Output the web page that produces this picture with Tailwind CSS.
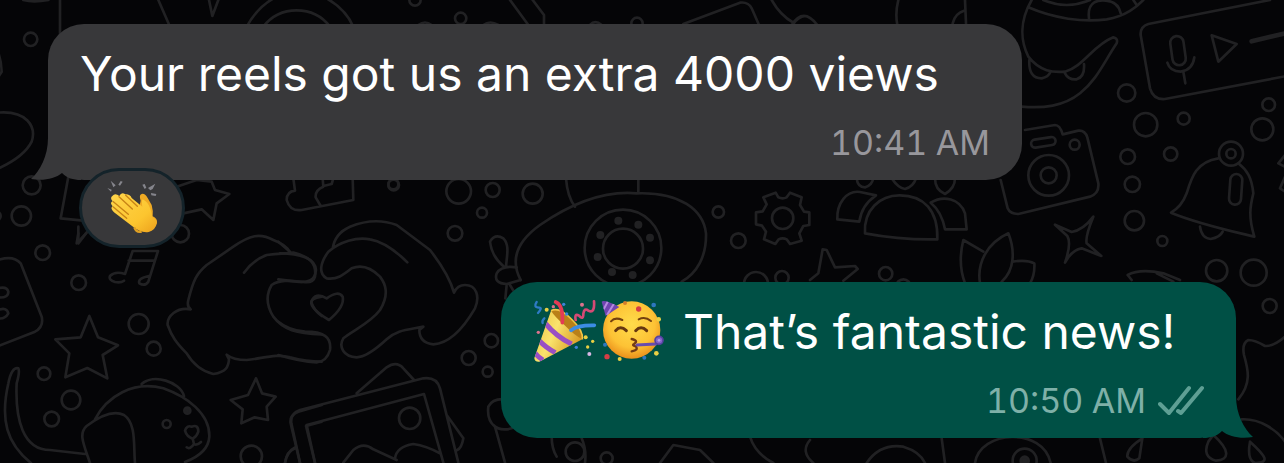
<!DOCTYPE html>
<html lang="en">
<head>
<meta charset="utf-8">
<meta name="viewport" content="width=device-width, initial-scale=1">
<title>Chat</title>
<script src="https://cdn.jsdelivr.net/npm/@tailwindcss/browser@4"></script>
</head>
<body class="bg-[#050507] font-['Inter',sans-serif]">
<main class="relative isolate min-h-screen overflow-hidden pt-6 pr-12 pb-6 pl-12">
  <!-- Doodle wallpaper -->
  <svg class="absolute top-0 left-0 -z-10 w-[1284px] max-w-none" viewBox="0 0 3852 1389" fill="none" stroke="#212123" stroke-width="8" stroke-linecap="round" stroke-linejoin="round" aria-hidden="true">
    <g>
      <path d="M70 0Q100 8 145 0M180 0V100M475 0L510 80M627 0L637 48L655 0M740 80C770 25 810 0 830-10M970-10C1010 10 1040 35 1060 80M790 80C840 15 940 15 990 80"/>
      <circle cx="92" cy="118" r="20"/><circle cx="1245" cy="0" r="17"/>
      <path d="M-8 150Q4 180 5 215L-8 235M-8 338C80 330 110 380 95 425C75 465 30 490-8 507M205 530L182 655L250 662"/>
      <circle cx="95" cy="556" r="27"/><circle cx="64" cy="648" r="29"/><circle cx="-12" cy="648" r="14"/><circle cx="1180" cy="553" r="15"/>
      <path d="M530 560L590 540L635 545L645 570L688 582L650 610L640 660L605 628L550 640M235 700L230 730L258 700M880 535L885 572Q860 575 860 600Q870 635 905 630L1060 600L1058 535M968 535L970 560Q945 570 947 592L962 618M1000 535L995 552L970 558"/>
    </g>
    <g transform="translate(0 660)">
      <path d="M235 20L235 70L262 35M-5 120Q40 105 62 130L125 290Q132 320 105 335L-5 378M-5 205Q20 198 25 215Q25 235-5 232M-5 270Q20 260 25 280Q15 298-5 295"/>
      <circle cx="128" cy="98" r="22"/><circle cx="236" cy="188" r="22"/><circle cx="541" cy="41" r="26"/><circle cx="416" cy="312" r="30"/><circle cx="461" cy="386" r="21"/><circle cx="132" cy="461" r="19"/><circle cx="213" cy="540" r="28"/><circle cx="155" cy="597" r="22"/><circle cx="754" cy="709" r="32"/>
      <path d="M372 182Q362 190 345 186Q325 180 330 168Q345 152 375 162L398 93H474L445 185Q435 200 418 190Q412 175 447 168M386 122H462"/>
      <path d="M268 288L242 352L166 358L208 400L196 472L262 444L322 475L308 405L354 376L294 352Z"/>
      <path d="M768 475L744 525L692 540L728 568L724 610L764 592L804 600L800 560L827 530L786 520Z"/>
      <path d="M93 729C20 670 0 600 25 490Q35 440 55 445Q60 455 50 490C45 600 70 690 150 690L255 702M270 729C250 670 235 640 260 618Q330 565 372 585C410 610 400 680 405 729M285 598C320 530 400 480 490 505C560 530 630 580 628 650Q625 700 555 726M425 492C460 460 540 485 552 528"/>
      <circle cx="500" cy="612" r="12"/><circle cx="562" cy="572" r="9" fill="#212123"/><path d="M555 632Q560 615 575 620Q595 612 595 635Q590 650 578 656Q560 650 555 632ZM578 656L582 672Q570 690 560 682M582 672Q590 678 603 666"/>
      <path d="M572 268Q560 260 565 240C580 180 590 160 620 135L700 80C750 45 780 38 820 60Q860 75 868 95M732 158Q760 120 800 105C830 102 850 100 880 98C930 110 950 130 945 170Q940 190 910 186C870 182 840 178 815 195C800 220 795 250 820 290C850 330 890 340 965 343M572 268C530 260 500 290 503 315C515 350 530 370 560 400Q590 450 640 462C680 455 685 440 687 418L680 404Q700 420 740 420C790 415 830 400 870 412Q920 425 965 425M965 230Q930 235 935 250Q945 275 965 288"/>
      <path d="M900 729L872 610Q868 585 895 575L965 555M945 729L918 618L965 605M855 729Q860 695 885 685"/>
    </g>
    <g transform="translate(840 510)">
      <path d="M-5 215L30 245M0 250C60 250 105 265 108 300C105 335 80 338 50 335L-5 328M-5 455Q25 480 75 485C130 485 155 500 150 540Q140 575 110 577Q60 575-5 555"/>
      <path d="M158 235Q165 190 210 170C260 150 310 150 350 165L450 240C485 285 510 325 522 368Q532 345 555 345C590 345 600 380 585 415C550 475 510 520 460 523C430 520 418 505 418 480L430 470C380 480 350 480 320 508C280 545 250 562 230 562C190 560 175 530 190 505C220 480 270 460 300 420C330 370 315 340 300 320C270 290 240 285 215 295C190 315 170 330 140 325C115 310 120 280 145 245C180 215 230 200 270 208C310 215 350 245 382 277"/>
      <path d="M147 450Q90 415 94 395Q105 365 140 385Q175 360 188 380Q195 410 147 450Z"/>
      <path d="M230 670L320 592Q350 572 370 595L402 630M60 878L34 760Q30 730 60 720L430 625Q470 620 480 655L535 878M105 878L80 765L432 672L490 878M500 735L550 805Q545 835 532 840M15 878Q20 845 45 832M190 878L220 840Q250 815 280 838L350 870M345 865Q350 830 400 822Q440 828 480 850"/>
      <circle cx="389" cy="745" r="32"/><circle cx="536" cy="64" r="37"/><circle cx="638" cy="60" r="21"/><circle cx="758" cy="71" r="30"/><circle cx="606" cy="128" r="15"/><circle cx="525" cy="190" r="22"/><circle cx="341" cy="45" r="16"/><circle cx="634" cy="512" r="20"/><circle cx="566" cy="564" r="21"/><circle cx="623" cy="605" r="15"/>
      <path d="M672 290Q635 260 630 215Q645 190 670 205C690 225 680 260 678 290M710 292Q665 285 650 310Q640 340 680 342L722 330M680 345L676 385M690 345L705 370"/>
      <path d="M690 690Q640 680 625 710Q620 750 645 770L675 878M640 765Q660 785 695 775M815 800Q815 835 830 860M905 805Q920 840 915 878"/>
    </g>
    <g transform="translate(1680 510)">
      <path d="M18 25Q22 80 45 110M235 25V68M-118 330C-150 270-130 215-60 165C20 110 120 60 230 70C360 65 430 120 438 190C440 260 410 310 365 335"/>
      <circle cx="189" cy="234" r="115"/><circle cx="189" cy="236" r="60"/>
      <g fill="#212123" stroke="none"><circle cx="175" cy="152" r="12"/><circle cx="235" cy="164" r="12"/><circle cx="270" cy="203" r="12"/><circle cx="270" cy="271" r="12"/><circle cx="218" cy="315" r="12"/><circle cx="156" cy="306" r="12"/><circle cx="113" cy="261" r="12"/><circle cx="121" cy="195" r="12"/></g>
      <circle cx="475" cy="126" r="17"/><circle cx="535" cy="212" r="22"/><circle cx="588" cy="342" r="36"/><circle cx="666" cy="323" r="20"/><circle cx="977" cy="311" r="20"/><circle cx="1030" cy="350" r="22"/>
      <path d="M647 68L655 82Q668 88 680 82L690 68L725 82L720 105L732 125L748 127V165L730 168L718 190L725 212L690 222L680 208Q668 202 656 208L646 222L612 208L618 185L606 167L588 163V127L608 124L620 103L610 82Z"/><circle cx="668" cy="145" r="32"/>
      <path d="M890 25Q893 52 915 52Q935 48 940 25M995 25Q1015 55 1035 57Q1060 50 1068 25M1125 25Q1125 60 1155 72Q1185 55 1185 25M832 148C830 100 860 60 900 66L948 76Q905 105 898 155ZM915 190C910 120 960 75 1020 76C1090 76 1135 120 1132 208Q1020 210 915 190ZM1112 98C1150 75 1200 85 1215 130L1220 178H1155Q1145 125 1112 98Z"/>
      <path d="M750 330L775 310L788 238L800 240L825 292L885 288L893 297L850 332"/>
    </g>
    <g transform="translate(2820 0)">
      <path d="M75 0L78 70M38 70Q45 40 72 32M275 0C240 60 240 120 265 170C300 215 340 218 375 215C430 200 460 135 520 112Q535 115 530 130C490 190 470 240 420 280C370 320 310 325 245 320M265 22C340 55 430 68 500 58C560 48 590 20 610 0M310 0Q380 30 450 0M447 55C440 0 480 0 498 2Q535 5 542 40M580 0L590 15M268 180Q265 235 305 235Q325 230 330 218M375 220Q385 240 410 238Q435 230 432 192"/>
      <path d="M990 0L625 72Q600 80 602 105L630 265Q640 300 675 297L1040 228M815 106L890 132L835 185Z"/><path d="M935 124L1035 100" stroke-width="14"/>
      <rect x="694" y="108" width="40" height="88" rx="20" transform="rotate(-8 714 152)"/><path d="M682 188Q690 215 722 215Q758 210 763 172M730 215L736 250"/>
      <path d="M255 390L345 375Q360 375 368 403L415 392Q435 390 442 412L475 550Q478 580 450 590L235 642Q210 642 203 625L182 540"/><rect x="273" y="415" width="74" height="24" rx="12" transform="rotate(-9 310 427)"/><circle cx="404" cy="434" r="15"/><circle cx="326" cy="526" r="61"/><circle cx="326" cy="526" r="24"/>
      <circle cx="560" cy="279" r="26"/><circle cx="617" cy="374" r="35"/><circle cx="731" cy="356" r="18"/><circle cx="986" cy="314" r="19"/><circle cx="967" cy="388" r="33"/><circle cx="563" cy="470" r="22"/><circle cx="692" cy="462" r="20"/><circle cx="577" cy="553" r="23"/><circle cx="583" cy="662" r="29"/>
      <circle cx="873" cy="461" r="36"/><circle cx="873" cy="461" r="14"/><path d="M835 475C770 485 755 530 740 580Q725 620 693 638C770 670 860 690 943 710C925 650 930 620 940 580C935 530 920 510 895 490M780 680Q785 715 812 717Q840 712 848 695"/><rect x="869" y="522" width="36" height="92" rx="18" transform="rotate(4 887 568)"/>
      <path d="M1035 465L1015 490L1035 500M1035 530L1020 565L1035 575"/>
    </g>
    <g transform="translate(2820 600)">
      <path d="M75 250C60 210 60 160 70 120L130 155M120 250C110 190 140 130 205 100C225 150 225 210 185 245M218 185Q260 178 283 190Q285 225 270 250M345 74L395 96Q430 90 460 50Q435 110 440 130L484 168L425 145Q395 150 375 188Q395 130 382 108ZM575 240L563 225Q600 205 670 220L720 240M650 220L700 245"/>
      <circle cx="667" cy="123" r="15"/><circle cx="830" cy="212" r="32"/><circle cx="941" cy="218" r="39"/><circle cx="989" cy="318" r="21"/>
      <path d="M1035 410Q1000 440 975 438Q945 420 925 420Q905 430 912 465C925 510 935 550 895 598M905 658C960 655 1010 690 1035 725M5 715L15 789M105 789C120 690 310 680 332 789M480 715L498 789M607 715L598 775Q580 790 562 770Q560 745 607 715M820 705C870 750 870 780 828 782Q785 770 805 725ZM930 725C980 770 990 789 945 789Q920 780 930 725Z"/><circle cx="254" cy="782" r="36"/><circle cx="254" cy="782" r="12" fill="#212123"/>
    </g>
    <g transform="translate(1260 0)">
      <path d="M270 0L325 75M338 0L372 45V72M790 72L960 8Q985 5 995 25L1017 75M1055 0Q1080 45 1120 68M1115 75Q1150 20 1192 75M190 75Q210 60 235 75M510 75Q525 58 545 75M-5 75Q15 60 35 75M1435 0Q1425 40 1432 75M1120 72Q1135 50 1155 48"/>
      <circle cx="122" cy="55" r="17"/><circle cx="651" cy="70" r="17"/>
    </g>
    <g transform="translate(1500 1310)">
      <circle cx="225" cy="45" r="28"/><circle cx="320" cy="65" r="18"/><path d="M480 79L520 25L600 40L640 79M750 0Q765 50 820 79M930 10Q900 45 940 79M1100 79Q1140 20 1210 30Q1260 45 1275 79"/>
    </g>
  </svg>

  <section class="flex flex-col" aria-label="Conversation">
    <article class="relative w-[974px] max-w-full self-start rounded-[36px] bg-[#38383a] px-8 pt-5 pb-[18px]">
      <svg class="absolute bottom-0 -left-[17px] h-[50px] w-[50px]" viewBox="0 0 50 50" fill="#38383a" aria-hidden="true"><path d="M17 0V8C17 26 9 41 0 49C12 51 24 49 31 43C36 48 42 50 50 50V0Z"/></svg>
      <p class="relative text-[48px] leading-[60px] whitespace-nowrap text-white">Your reels got us an extra 4000 views</p>
      <time class="relative mt-5 block text-right text-[34px] leading-[38px] text-[#98979c] tabular-nums">10:41&#8197;AM</time>
      <button class="absolute top-36 left-[31px] flex h-20 w-[106px] items-center justify-center rounded-full border-3 border-[#14232a] bg-[#38383a]" aria-label="Clapping hands reaction">
        <svg class="w-[54px]" viewBox="0 0 162 170" aria-hidden="true">
          <defs><linearGradient id="skin" x1="0" y1="0" x2="1" y2="1"><stop stop-color="#ffd64c"/><stop offset=".65" stop-color="#fcc52f"/><stop offset="1" stop-color="#eda11c"/></linearGradient></defs>
          <path d="M7 24L20 29L18 35ZM17 2L32 16L25 22ZM47 3L53 5L45 17L40 14ZM112 14L119 12L124 23L119 27ZM129 24L151 11L143 27L136 31ZM138 39L154 42L152 48L139 46Z" fill="#85858c"/>
          <path d="M107 62Q101 44 110 42Q119 39 128 54L140 75Q145 92 143 109Q158 116 156 129Q151 151 131 156Q110 160 90 142Z" fill="#efaa24"/>
          <path d="M22 48Q30 37 43 48Q49 35 61 43Q75 42 80 54L112 80Q109 63 113 58Q128 65 135 84Q141 100 142 112Q157 119 154 132Q146 151 126 156Q103 156 86 142L27 97Q14 85 23 79Q13 68 23 64Q14 54 22 48Z" fill="url(#skin)"/>
          <path d="M42 50L82 87M62 46L97 79M25 65L70 103M25 81L65 115" fill="none" stroke="#c78316" stroke-width="4" stroke-linecap="round"/>
          <path d="M88 142Q94 159 110 155" stroke="#dfa024" stroke-width="7" fill="none"/>
        </svg>
      </button>
    </article>

    <article class="relative mt-[102px] w-[735px] max-w-full self-end rounded-[36px] bg-[#005045] px-8 pt-5 pb-[18px]">
      <svg class="absolute -right-[17px] bottom-0 h-[50px] w-[50px]" viewBox="0 0 50 50" fill="#005045" aria-hidden="true"><path d="M33 0V8C33 26 41 41 50 49C38 51 26 49 19 43C14 48 8 50 0 50V0Z"/></svg>
      <p class="relative flex items-center text-[48px] leading-[60px] whitespace-nowrap text-white">
        <svg class="-my-1 mr-1 w-16 shrink-0" viewBox="0 0 192 192" role="img" aria-label="Party popper">
          <defs><linearGradient id="cone" x1="0" y1="0" x2="1" y2="0.5"><stop stop-color="#e9bd3c"/><stop offset=".5" stop-color="#fae36d"/><stop offset="1" stop-color="#d99b24"/></linearGradient><clipPath id="coneClip"><path d="M54 32Q80 24 115 57Q155 97 148 118L19 185Q4 186 4 174Z"/></clipPath></defs>
          <path d="M54 32Q80 24 115 57Q155 97 148 118L19 185Q4 186 4 174Z" fill="url(#cone)"/>
          <g clip-path="url(#coneClip)" fill="none" stroke="#9a4fc4" stroke-width="15"><path d="M37 70Q70 110 116 132M19 122Q38 142 67 158M5 158Q14 170 30 180"/></g>
          <path d="M54 32Q78 20 115 57Q152 92 148 118Q124 106 95 76Q65 50 54 32Z" fill="#b98018"/><path d="M54 32Q78 20 115 57Q152 92 148 118" fill="none" stroke="#f1c546" stroke-width="5"/>
          <path d="M88 68Q91 14 68 6" fill="none" stroke="#e43b54" stroke-width="11" stroke-linecap="round"/>
          <path d="M114 91Q132 75 184 76" fill="none" stroke="#3c8de5" stroke-width="11" stroke-linecap="round"/>
          <path d="M11 6Q0 22 18 23Q30 22 15 39M34 55Q26 62 29 69" fill="none" stroke="#2e7bc5" stroke-width="7" stroke-linecap="round"/>
          <path d="M128 60Q124 38 138 47Q151 62 151 41Q154 22 166 32Q186 42 183 4" fill="none" stroke="#d64a75" stroke-width="8" stroke-linecap="round"/>
          <g fill="#3c83d8"><circle cx="92" cy="13" r="5"/><circle cx="101" cy="42" r="5"/><circle cx="130" cy="142" r="5"/></g><g fill="#e8cf43"><circle cx="41" cy="29" r="6"/><circle cx="158" cy="112" r="6"/><circle cx="179" cy="124" r="5"/><circle cx="164" cy="141" r="5"/></g><g fill="#dc728d"><circle cx="61" cy="20" r="5"/><circle cx="16" cy="97" r="5"/><circle cx="147" cy="14" r="6"/></g><circle cx="169" cy="162" r="6" fill="#d7b8e5"/>
        </svg>
        <svg class="-my-1 mr-[18px] w-16 shrink-0" viewBox="0 0 192 192" role="img" aria-label="Partying face">
          <defs><radialGradient id="face" cx=".5" cy=".4" r=".62"><stop stop-color="#ffdc4b"/><stop offset=".65" stop-color="#fdc235"/><stop offset="1" stop-color="#e98b19"/></radialGradient><clipPath id="hatClip"><path d="M2 5Q10-2 55 21Q38 32 14 48Z"/></clipPath></defs>
          <circle cx="92" cy="90" r="86" fill="url(#face)"/>
          <path d="M2 5Q10-2 55 21Q38 32 14 48Z" fill="#7144b0"/><g clip-path="url(#hatClip)" stroke="#b58be0" stroke-width="6" fill="none"><path d="M24-2L8 28M44 3L18 45"/></g>
          <path d="M30 64Q42 50 64 60M113 58Q132 48 150 63" fill="none" stroke="#74400f" stroke-width="6" stroke-linecap="round"/>
          <path d="M44 92Q58 75 76 92M104 92Q120 75 137 92" fill="none" stroke="#663710" stroke-width="9" stroke-linecap="round"/>
          <path d="M92 117Q114 122 99 132Q92 136 104 139Q114 151 92 154" fill="none" stroke="#743c14" stroke-width="7" stroke-linecap="round"/>
          <path d="M108 135L164 132" stroke="#684cae" stroke-width="9" stroke-linecap="round"/><circle cx="174" cy="121" r="12" fill="#8464c9" stroke="#5542a1" stroke-width="5"/><circle cx="174" cy="121" r="4" fill="#b9a0e8"/>
          <g fill="#d63d45"><circle cx="113" cy="27" r="8"/><circle cx="18" cy="170" r="8"/></g><g fill="#2e77bf"><circle cx="158" cy="15" r="7"/><circle cx="130" cy="173" r="6"/><circle cx="12" cy="134" r="6"/></g><g fill="#e8d044"><circle cx="173" cy="58" r="7"/><circle cx="56" cy="177" r="6"/><circle cx="166" cy="160" r="7"/></g><circle cx="72" cy="9" r="6" fill="#d47d2c"/>
        </svg>
        <span>That’s fantastic news!</span>
      </p>
      <div class="relative mt-5 flex items-center justify-end gap-3 text-[34px] leading-[38px] text-[#7fb0a8]">
        <time class="tabular-nums">10:50&#8197;AM</time>
        <svg class="h-8 w-[46px]" viewBox="0 0 46 32" fill="none" stroke="#5e9f94" stroke-width="4" stroke-linecap="round" stroke-linejoin="round" role="img" aria-label="Delivered"><path d="M2 19L11 28L31 3M20 26L23 28L44 3"/></svg>
      </div>
    </article>
  </section>
</main>
</body>
</html>
